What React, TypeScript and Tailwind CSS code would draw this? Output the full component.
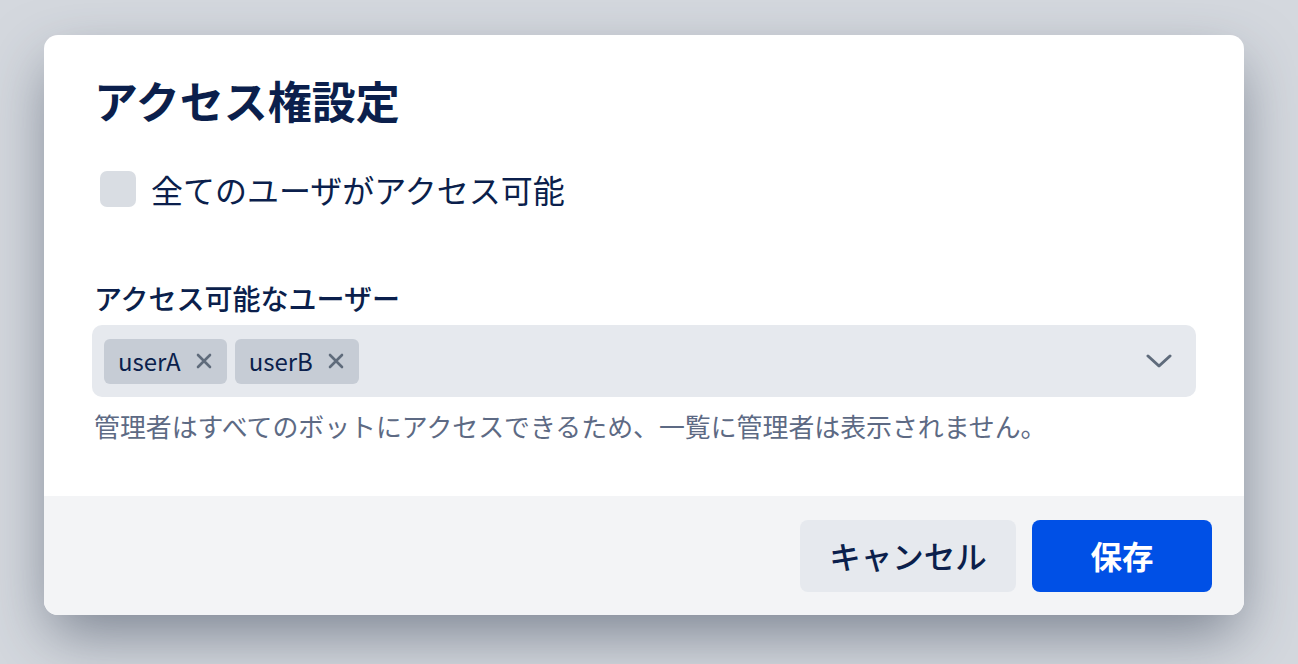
import React from "react";

export default function App() {
  return (
    <div
      className="w-[1298px] h-[664px] bg-[#d4d8de] pt-[35px] pl-[44px] overflow-hidden"
      style={{ fontFamily: '"Noto Sans CJK JP", "Noto Sans", sans-serif' }}
    >
      <div className="w-[1200px] h-[580px] rounded-[14px] bg-white overflow-hidden flex flex-col shadow-[0_24px_60px_-6px_rgba(50,60,80,0.55)]">
        <div className="h-[461px] px-12 pt-[38px] flex flex-col">
          <h2 className="text-[44px] leading-[54px] font-bold text-[#0b1f4c] pl-[2px]">アクセス権設定</h2>
          <div className="mt-[44px] flex items-center h-[36px] pl-[8px]">
            <div className="w-[36px] h-[36px] rounded-[7px] bg-[#d9dde3]" />
            <span className="ml-[15px] text-[32px] leading-[36px] text-[#0b1f4c]">全てのユーザがアクセス可能</span>
          </div>
          <div className="mt-[73px] text-[28px] leading-[36px] font-medium text-[#0b1f4c] pl-[2px]">アクセス可能なユーザー</div>
          <div className="mt-[9px] h-[72px] rounded-[10px] bg-[#e6e9ee] flex items-center pl-[12px] pr-[24px]">
            <div className="flex gap-[8px] flex-1">
              {["userA", "userB"].map((u) => (
                <div key={u} className="h-[45px] rounded-[6px] bg-[#c6ccd5] flex items-center pl-[14px] pr-[15px]">
                  <span className="text-[24px] leading-none text-[#0b1f4c]">{u}</span>
                  <svg className="ml-[15px]" width="16" height="16" viewBox="0 0 16 16">
                    <path d="M2 2 L14 14 M14 2 L2 14" stroke="#5f6b7b" strokeWidth="2.6" strokeLinecap="round" />
                  </svg>
                </div>
              ))}
            </div>
            <svg width="26" height="16" viewBox="0 0 26 16">
              <path d="M2 3 L13 13 L24 3" stroke="#5f6b7b" strokeWidth="3" fill="none" strokeLinecap="round" strokeLinejoin="round" />
            </svg>
          </div>
          <div className="mt-[12px] text-[25.9px] leading-[34px] text-[#5d6a84] pl-[2px]">
            管理者はすべてのボットにアクセスできるため、一覧に管理者は表示されません。
          </div>
        </div>
        <div className="flex-1 bg-[#f3f4f6] flex items-center justify-end gap-[16px] pr-[32px]">
          <button className="w-[216px] h-[72px] rounded-[8px] bg-[#e6e9ee] text-[31.5px] font-medium text-[#0b1f4c]">キャンセル</button>
          <button className="w-[180px] h-[72px] rounded-[8px] bg-[#0050e6] text-[31.5px] font-bold text-white">保存</button>
        </div>
      </div>
    </div>
  );
}
